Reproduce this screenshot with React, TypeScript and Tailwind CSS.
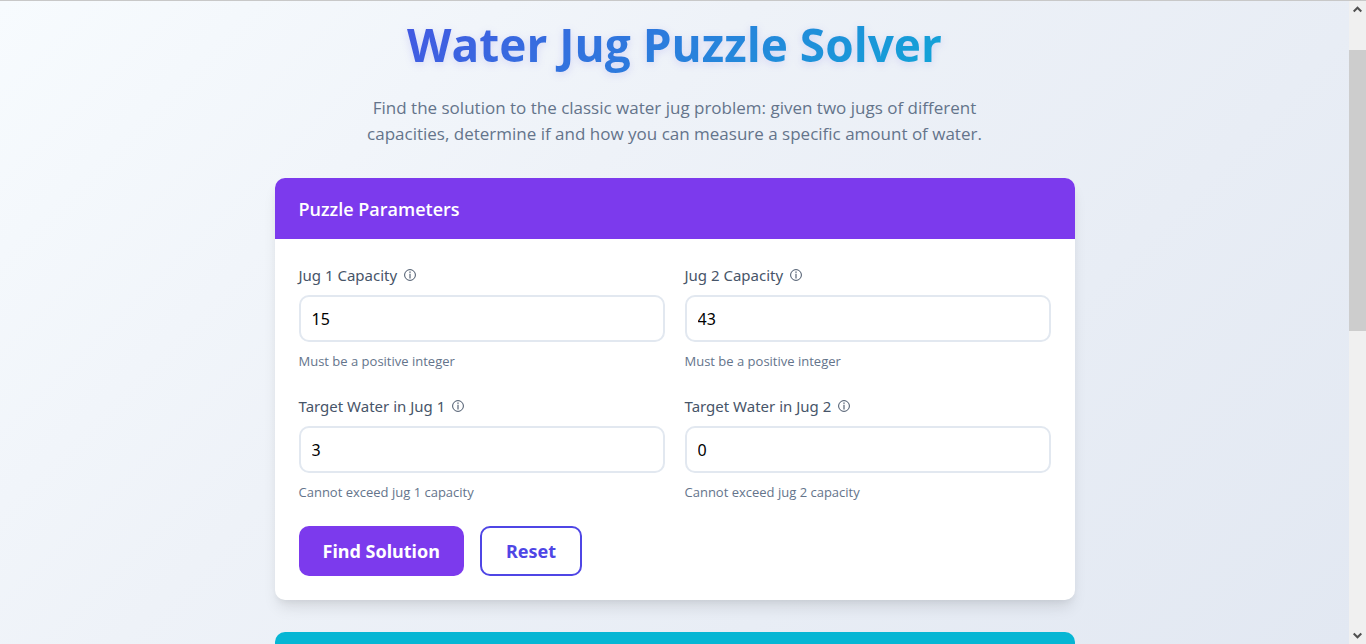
import { useState } from "react";

type FieldProps = {
  id: string;
  label: string;
  hint: string;
  value: string;
  onChange: (value: string) => void;
};

function InfoIcon() {
  return (
    <svg width="12" height="12" viewBox="0 0 12 12" fill="none" stroke="currentColor" aria-hidden="true">
      <circle cx="6" cy="6" r="5.4" strokeWidth="1" />
      <path d="M6 4.8v4.6" strokeWidth="1.1" />
      <path d="M6 2.5v1.3" strokeWidth="1.3" />
    </svg>
  );
}

function Field({ id, label, hint, value, onChange }: FieldProps) {
  return (
    <div className="flex flex-col">
      <label
        htmlFor={id}
        className="mb-2 flex items-center gap-[7px] font-['Noto_Sans',sans-serif] text-[15px] leading-6 text-[#475569]"
      >
        {label}
        <InfoIcon />
      </label>
      <input
        id={id}
        type="text"
        inputMode="numeric"
        value={value}
        onChange={(event) => onChange(event.target.value)}
        className="h-[47px] w-full rounded-[10px] border-2 border-[#e2e8f0] bg-white px-[11px] font-['Noto_Sans',sans-serif] text-base text-black outline-none focus:border-violet-600"
      />
      <p className="mt-2 text-[13px] leading-[22px] text-[#64748b]">{hint}</p>
    </div>
  );
}

function ScrollRail() {
  return (
    <div className="flex w-[17px] shrink-0 flex-col items-center bg-[#f0f0f0] text-[#505050]" aria-hidden="true">
      <svg className="mt-1 shrink-0" width="9" height="9" viewBox="0 0 9 9" fill="none" stroke="currentColor" strokeWidth="2">
        <path d="M0.7 6.5 4.5 2.7l3.8 3.8" />
      </svg>
      <div className="mt-9 h-[281px] w-full bg-[#cdcdcd]" />
      <svg className="mt-auto mb-1 shrink-0" width="9" height="9" viewBox="0 0 9 9" fill="none" stroke="currentColor" strokeWidth="2">
        <path d="M0.7 2.5 4.5 6.3l3.8-3.8" />
      </svg>
    </div>
  );
}

const initial = { jug1: "15", jug2: "43", target1: "3", target2: "0" };

export default function App() {
  const [values, setValues] = useState(initial);
  const update = (key: keyof typeof initial) => (value: string) => setValues({ ...values, [key]: value });

  return (
    <div className="flex h-screen overflow-hidden border-t border-[#c8c8c8] font-['Open_Sans',sans-serif]">
      <main className="min-w-0 flex-1 overflow-hidden bg-linear-[135deg,#f7fbfe,#eef2f8_38%,#e2e8f2] px-4 pt-[11px]">
        <header className="text-center">
          <h1 className="mx-auto max-w-[800px] bg-linear-[135deg,#4f46e5,#06b6d4] bg-clip-text text-[46px] leading-[64px] font-bold text-transparent [filter:drop-shadow(0_2px_4px_rgba(79,70,229,0.16))]">
            Water Jug Puzzle Solver
          </h1>
          <p className="mx-auto mt-[19px] max-w-[620px] text-[17px] leading-[26px] text-[#64748b]">
            Find the solution to the classic water jug problem: given two jugs of different capacities, determine if and
            how you can measure a specific amount of water.
          </p>
        </header>

        <section className="mx-auto mt-[31px] max-w-[800px] overflow-hidden rounded-[10px] bg-white shadow-[0_10px_15px_-3px_rgba(0,0,0,0.1),0_4px_6px_-2px_rgba(0,0,0,0.05)]">
          <h2 className="bg-[#7c3aed] px-6 pt-[17px] pb-[15px] text-[18px] leading-[29px] font-semibold text-white">
            Puzzle Parameters
          </h2>
          <form className="p-6" onSubmit={(event) => event.preventDefault()}>
            <div className="grid grid-cols-2 gap-x-5 gap-y-[22px]">
              <Field id="jug1" label="Jug 1 Capacity" hint="Must be a positive integer" value={values.jug1} onChange={update("jug1")} />
              <Field id="jug2" label="Jug 2 Capacity" hint="Must be a positive integer" value={values.jug2} onChange={update("jug2")} />
              <Field id="target1" label="Target Water in Jug 1" hint="Cannot exceed jug 1 capacity" value={values.target1} onChange={update("target1")} />
              <Field id="target2" label="Target Water in Jug 2" hint="Cannot exceed jug 2 capacity" value={values.target2} onChange={update("target2")} />
            </div>
            <div className="mt-[23px] flex gap-4 font-['Noto_Sans',sans-serif] text-[18px] font-bold">
              <button type="submit" className="h-[50px] rounded-[10px] bg-[#7c3aed] px-6 text-white">
                Find Solution
              </button>
              <button
                type="button"
                onClick={() => setValues(initial)}
                className="h-[50px] rounded-[10px] border-2 border-[#4f46e5] bg-white px-6 text-[#4f46e5]"
              >
                Reset
              </button>
            </div>
          </form>
        </section>

        <section className="mx-auto mt-8 max-w-[800px] overflow-hidden rounded-[10px] bg-white">
          <div className="h-[61px] bg-[#06b6d4]" />
        </section>
      </main>
      <ScrollRail />
    </div>
  );
}
